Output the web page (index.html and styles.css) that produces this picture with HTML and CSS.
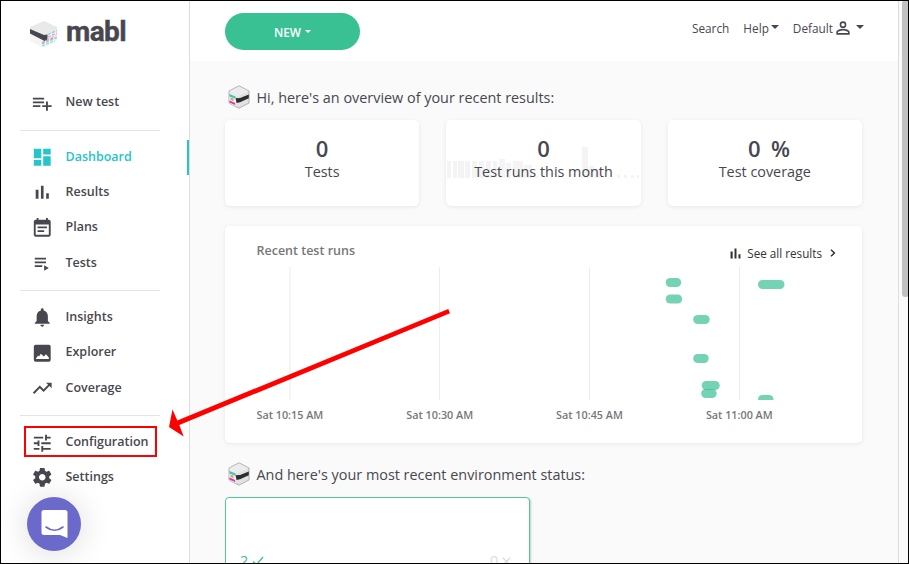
FILE: index.html
```html
<!DOCTYPE html>
<html lang="en">
<head>
<meta charset="utf-8">
<title>mabl</title>
<link rel="stylesheet" href="styles.css">
</head>
<body>
<svg class="defs" width="0" height="0">
  <symbol id="cube" viewBox="0 0 22 24">
    <path d="M11 .8 21 6v12l-10 5.200L1 18V6z" fill="#e2e2e2" stroke="#aaa" stroke-width=".9"/>
    <path d="M11 1.500 20.300 6.300 8 12 1.700 8.500V6.300z" fill="#ececec"/>
    <path d="M1.400 9 8 12v9L1.400 18z" fill="#f3f3f3"/>
    <path d="M1.400 9 7.600 11.400v2.400L1.400 11.600z" fill="#35c6cc"/>
    <path d="M2.500 12.400l3 1v2.800l-3-1.200z" fill="#f5a04c"/>
    <path d="M1.400 15.600l5.800 2.400v2l-5.800-2.600z" fill="#c83cb4"/>
    <path d="M7.500 13.200 12 13l8.800-3.500v3.700L12 17.300 8.600 18z" fill="#2d2d31"/>
  </symbol>
  <symbol id="bars" viewBox="0 0 24 24"><path d="M5 9.200h3V19H5zM10.600 5h2.800v14h-2.800zM16.200 13H19v6h-2.800z"/></symbol>
</svg>
<div class="app">
  <aside class="sidebar">
    <div class="logo">
      <svg width="28" height="29" viewBox="0 0 28 29">
        <path d="M14 1 27 7v14L14 28 0 21V8z" fill="#f4f4f4"/>
        <path d="M14 1 27 7v4l-12 6L0 9V7z" fill="#e9e9e9"/>
        <path d="M0 9l14 6 3.500-.5v5l-3 1.500L0 13.500z" fill="#46464f"/>
        <g fill="none" stroke-width="1.200" stroke-dasharray="3 1.500">
          <path d="M18 14.500 27 10.500" stroke="#6bd6d8"/><path d="M18 17 27 13" stroke="#e08fd4"/>
          <path d="M17 19.500 27 15" stroke="#f2c49a"/><path d="M12 24 27 17.500" stroke="#5fd2d5"/>
          <path d="M12 22.500 25 17" stroke="#dd86d0"/><path d="M12 26 25 20.500" stroke="#8fdccf"/>
        </g>
      </svg>
      <span>mabl</span>
    </div>
    <nav class="nav">
      <a class="item"><svg class="ico" viewBox="0 0 24 24"><path d="M14 10H2v2h12v-2zm0-4H2v2h12V6zm4 8v-4h-2v4h-4v2h4v4h2v-4h4v-2h-4zM2 16h8v-2H2v2z"/></svg><span>New test</span></a>
      <hr>
      <a class="item active"><svg class="ico" viewBox="0 0 24 24"><path d="M3 13h8V3H3v10zm0 8h8v-6H3v6zm10 0h8V11h-8v10zm0-18v6h8V3h-8z"/></svg><span>Dashboard</span></a>
      <a class="item"><svg class="ico"><use href="#bars"/></svg><span>Results</span></a>
      <a class="item"><svg class="ico" viewBox="0 0 24 24"><path d="M17 10H7v2h10v-2zm2-7h-1V1h-2v2H8V1H6v2H5c-1.110 0-1.990.9-1.990 2L3 19c0 1.100.89 2 2 2h14c1.100 0 2-.9 2-2V5c0-1.100-.9-2-2-2zm0 16H5V8h14v11zm-5-5H7v2h7v-2z"/></svg><span>Plans</span></a>
      <a class="item"><svg class="ico" viewBox="0 0 24 24"><path d="M4 10h12v2H4zm0-4h12v2H4zm0 8h8v2H4zm10 0v6l5-3z"/></svg><span>Tests</span></a>
      <hr>
      <a class="item"><svg class="ico" viewBox="0 0 24 24"><path d="M12 22c1.100 0 2-.9 2-2h-4c0 1.100.89 2 2 2zm6-6v-5c0-3.070-1.640-5.640-4.500-6.320V4c0-.83-.67-1.500-1.500-1.500s-1.500.67-1.500 1.500v.68C7.630 5.360 6 7.920 6 11v5l-2 2v1h16v-1l-2-2z"/></svg><span>Insights</span></a>
      <a class="item"><svg class="ico" viewBox="0 0 24 24"><path fill-rule="evenodd" d="M5 3h14a2 2 0 0 1 2 2v14a2 2 0 0 1-2 2H5a2 2 0 0 1-2-2V5a2 2 0 0 1 2-2zm0 15h14v-1.500L16 13l-2.200 2.500L10.500 12.500 8.500 15.500 7.500 14.500z"/></svg><span>Explorer</span></a>
      <a class="item"><svg class="ico" viewBox="0 0 24 24"><path d="M16 6l2.290 2.290-4.880 4.880-4-4L2 16.590 3.410 18l6-6 4 4 6.300-6.290L22 12V6z"/></svg><span>Coverage</span></a>
      <hr>
      <a class="item"><svg class="ico" viewBox="0 0 24 24"><path d="M3 17v2h6v-2H3zM3 5v2h10V5H3zm10 16v-2h8v-2h-8v-2h-2v6h2zM7 9v2H3v2h4v2h2V9H7zm14 4v-2H11v2h10zm-6-4h2V7h4V5h-4V3h-2v6z"/></svg><span>Configuration</span></a>
      <a class="item last"><svg class="ico" viewBox="0 0 24 24"><path d="M19.430 12.980c.04-.32.07-.64.07-.98s-.03-.66-.07-.98l2.110-1.650c.19-.15.24-.42.12-.64l-2-3.460c-.12-.22-.39-.3-.61-.22l-2.490 1c-.52-.4-1.080-.73-1.690-.98l-.38-2.650C14.460 2.180 14.250 2 14 2h-4c-.25 0-.46.18-.49.42l-.38 2.650c-.61.25-1.170.59-1.690.98l-2.490-1c-.23-.09-.49 0-.61.22l-2 3.460c-.13.22-.07.49.12.64l2.110 1.650c-.04.32-.07.65-.07.98s.03.66.07.98l-2.110 1.650c-.19.15-.24.42-.12.64l2 3.460c.12.22.39.3.61.22l2.490-1c.52.4 1.080.73 1.690.98l.38 2.650c.03.24.24.42.49.42h4c.25 0 .46-.18.49-.42l.38-2.650c.61-.25 1.170-.59 1.690-.98l2.490 1c.23.09.49 0 .61-.22l2-3.460c.12-.22.07-.49-.12-.64l-2.110-1.650zM12 15.500c-1.930 0-3.500-1.570-3.500-3.500s1.570-3.500 3.500-3.500 3.500 1.570 3.500 3.500-1.570 3.500-3.500 3.500z"/></svg><span>Settings</span></a>
    </nav>
  </aside>
  <main class="main">
    <header class="top">
      <button class="new">NEW<i class="caret small"></i></button>
      <div class="links">
        <a>Search</a>
        <a>Help<i class="caret"></i></a>
        <a>Default<svg class="user" viewBox="0 0 24 24"><path d="M12 5.900a2.100 2.100 0 1 1 0 4.200 2.100 2.100 0 0 1 0-4.200m0 9c2.970 0 6.100 1.460 6.100 2.100v1.100H5.900V17c0-.64 3.130-2.100 6.100-2.100M12 4a4 4 0 1 0 0 8 4 4 0 0 0 0-8zm0 9c-2.670 0-8 1.340-8 4v3h16v-3c0-2.660-5.330-4-8-4z"/></svg><i class="caret"></i></a>
      </div>
    </header>
    <div class="content">
      <h2><svg width="22" height="24"><use href="#cube"/></svg>Hi, here's an overview of your recent results:</h2>
      <section class="stats">
        <div class="card stat"><b>0</b><span>Tests</span></div>
        <div class="card stat">
          <svg class="spark" width="193" height="32" viewBox="0 0 193 32">
            <path d="M0 15h4v17H0zM6 15h4v17H6zM11 15h6v17h-6zM18 15h5v17h-5zM25 15h5v17h-5zM32 15h5v17h-5zM39 15h5v17h-5zM46 15h4v17h-4zM52 13h6v19h-6zM59 17h5v15h-5zM66 15h10v17H66zM77 19h8v13h-8zM88 30h3v2h-3zM135 1h6v31h-6zM142 20h5v12h-5zM148 23h5v9h-5zM170 29h3v3h-3zM177 29h3v3h-3zM184 29h3v3h-3zM190 29h2v3h-2z"/>
          </svg>
          <b>0</b><span>Test runs this month</span>
        </div>
        <div class="card stat"><b class="pct">0&nbsp; %</b><span>Test coverage</span></div>
      </section>
      <section class="card chart">
        <div class="chart-head"><h3>Recent test runs</h3>
          <a><svg width="17" height="17"><use href="#bars"/></svg>See all results<svg class="chev" width="6" height="8" viewBox="0 0 6 8"><path d="M1 .8 4.400 4 1 7.200"/></svg></a>
        </div>
        <svg class="plot" width="600" height="133" viewBox="0 0 600 133">
          <g class="grid"><path d="M33 0v133M182.600 0v133M332.500 0v133M482.500 0v133"/></g>
          <g class="runs">
            <rect x="408.700" y="11" width="15.500" height="9" rx="4.500"/><rect x="408.700" y="27.500" width="16.500" height="9" rx="4.500"/>
            <rect x="436.200" y="48" width="16.500" height="9" rx="4.500"/><rect x="436.200" y="87" width="15.500" height="9" rx="4.500"/>
            <rect x="444.700" y="114" width="18" height="9" rx="4.500"/><rect x="444.200" y="122" width="15.500" height="9" rx="4.500"/>
            <rect x="501" y="13" width="26.500" height="9" rx="4.500"/><rect x="501" y="128" width="15.500" height="9" rx="4.500"/>
          </g>
        </svg>
        <div class="axis"><span>Sat 10:15 AM</span><span>Sat 10:30 AM</span><span>Sat 10:45 AM</span><span>Sat 11:00 AM</span></div>
      </section>
      <h2><svg width="22" height="24"><use href="#cube"/></svg>And here's your most recent environment status:</h2>
      <section class="env">
        <span class="pass">2 <svg width="12" height="10" viewBox="0 0 12 10"><path d="M1 5.500l3.300 3.300L11 1"/></svg></span>
        <span class="fail">0 <svg width="9" height="9" viewBox="0 0 9 9"><path d="M.8.8l7.400 7.400M8.200.8.800 8.200"/></svg></span>
      </section>
    </div>
  </main>
  <div class="scroll"><div class="thumb"></div></div>
</div>
<div class="chat"><svg width="27" height="29" viewBox="0 0 27 29"><path d="M3 0h21q2.500 0 2.500 2.500V28l-7.500-3H3q-2.500 0-2.500-2.500v-20Q.5 0 3 0z" fill="#fff"/><path d="M5 17q8.500 6.500 17 0" fill="none" stroke="#6b69c9" stroke-width="1.600" stroke-linecap="round"/></svg></div>
<div class="highlight"></div>
<svg class="arrow" width="290" height="135" viewBox="0 0 290 135"><path d="M288.300 2 290 6.300 19.300 118 23.700 129.500 9 120 12.500 102.500 17.300 113.500z"/></svg>
<div class="frame"></div>
</body>
</html>
```

FILE: styles.css
```css
* { box-sizing: border-box; }
body { margin: 0; width: 909px; height: 564px; overflow: hidden; font-family: "Open Sans", sans-serif; color: #48474f; background: #fff; }
.defs { position: absolute; }
.app { display: flex; width: 909px; height: 564px; padding-left: 1px; overflow: hidden; }
.frame { position: absolute; inset: 0; width: 909px; height: 564px; border: 1px solid #000; }

.sidebar { width: 189px; border-right: 1px solid #dcdcdc; flex: none; }
.logo { display: flex; align-items: center; height: 66px; padding-left: 29px; gap: 8px; }
.logo svg { margin-top: 3px; }
.logo span { font: 700 28px/30px Roboto, sans-serif; letter-spacing: -.6px; -webkit-text-stroke: .4px #48474f; margin-top: -3px; }
.nav { padding-top: 19.250px; }
.item { display: flex; align-items: center; height: 35.250px; padding-left: 30px; gap: 12px; font-size: 12.500px; font-weight: 600; }
.item.last { height: 34.250px; }
.item span { position: relative; top: -1px; }
.item.active { color: #25c5cb; border-right: 2px solid #25c5cb; }
.ico { width: 22.500px; height: 22.500px; fill: currentColor; flex: none; }
.nav hr { width: 140px; height: 1px; border: 0; background: #e4e4e4; margin: 9.300px 0 9px 19px; }

.main { width: 709px; flex: none; background: #fafafa; border-right: 1px solid #ddd; }
.top { height: 61px; background: #fff; display: flex; justify-content: space-between; align-items: flex-start; padding: 13px 34px 0 35px; }
.new { width: 135px; height: 37px; border: 0; border-radius: 19px; background: #39c194; color: #fff; font: 600 11.800px "Open Sans", sans-serif; display: flex; align-items: center; justify-content: center; padding: 0; }
.caret { display: inline-block; border: 4px solid transparent; border-top-color: currentColor; border-bottom: 0; margin-left: 2px; margin-top: -2px; }
.caret.small { border-width: 3px 3px 0; margin-left: 4px; margin-top: 0; }
.links { display: flex; gap: 14px; font-size: 11.800px; height: 30px; }
.links a { display: flex; align-items: center; }
.user { width: 20px; height: 20px; fill: #48474f; }
.user + .caret { margin-left: 3px; }

.content { padding: 18px 35px 0 35px; }
.content h2 { display: flex; align-items: center; gap: 7px; height: 36px; margin: 0 0 5px 2.500px; font-size: 14.400px; font-weight: 400; white-space: nowrap; }
.card { background: #fff; border-radius: 5px; box-shadow: 0 1px 4px rgba(0,0,0,.08); }
.stats { display: grid; grid-template-columns: repeat(3, 1fr); gap: 27px; height: 86px; width: 637px; }
.stat { position: relative; display: flex; flex-direction: column; align-items: center; padding-top: 16px; }
.stat b { font-size: 22px; font-weight: 600; line-height: 26px; position: relative; top: -1px; }
.stat .pct { left: 4px; word-spacing: 0; letter-spacing: -.3px; }
.stat span { font-size: 14.380px; line-height: 19px; position: relative; }
.spark { position: absolute; left: 1px; top: 26px; fill: #f4f4f4; }
.chart { width: 637px; height: 217px; margin: 20px 0 13px; padding: 15px 26px 0 31.500px; }
.chart-head { display: flex; justify-content: space-between; height: 26px; }
.chart-head h3 { margin: 0; font-size: 12.500px; line-height: 19px; font-weight: 600; color: #77777a; }
.chart-head a { display: flex; align-items: center; font-size: 11.700px; height: 24px; color: #333; }
.chart-head a svg:first-child { fill: #333; margin-right: 3px; }
.chev { fill: none; stroke: #333; stroke-width: 1.500; margin-left: 8px; }
.plot { display: block; }
.grid path { stroke: #ececec; }
.runs { fill: #39c194; fill-opacity: .7; }
.axis { display: flex; gap: 83px; font-size: 10.800px; font-weight: 600; color: #77777a; line-height: 15px; margin-top: 7px; white-space: nowrap; }
.axis span { width: 66.800px; }
.env { width: 305px; height: 120px; border: 1px solid #4bcaa0; border-radius: 4px; background: #fff; box-shadow: 1px 1px 2px rgba(0,0,0,.2); display: flex; justify-content: space-between; padding: 53px 18px 0 14px; font-size: 14.400px; }
.env svg { fill: none; stroke: currentColor; stroke-width: 1.300; }
.pass { color: #39c194; }
.fail { color: #dcdcdc; }

.scroll { flex: 1; background: #fafafa; padding-left: 3px; }
.thumb { height: 297px; background: #c1c1c1; border-radius: 5px; }

.chat { position: absolute; left: 27px; top: 497px; width: 54px; height: 54px; border-radius: 50%; background: #6b69c9; display: flex; align-items: center; justify-content: center; box-shadow: 0 2px 32px rgba(0,0,0,.15); }
.highlight { position: absolute; left: 24px; top: 426px; width: 133px; height: 31px; border: 2px solid #f00; }
.arrow { position: absolute; left: 160px; top: 307px; fill: #f00; }
```
